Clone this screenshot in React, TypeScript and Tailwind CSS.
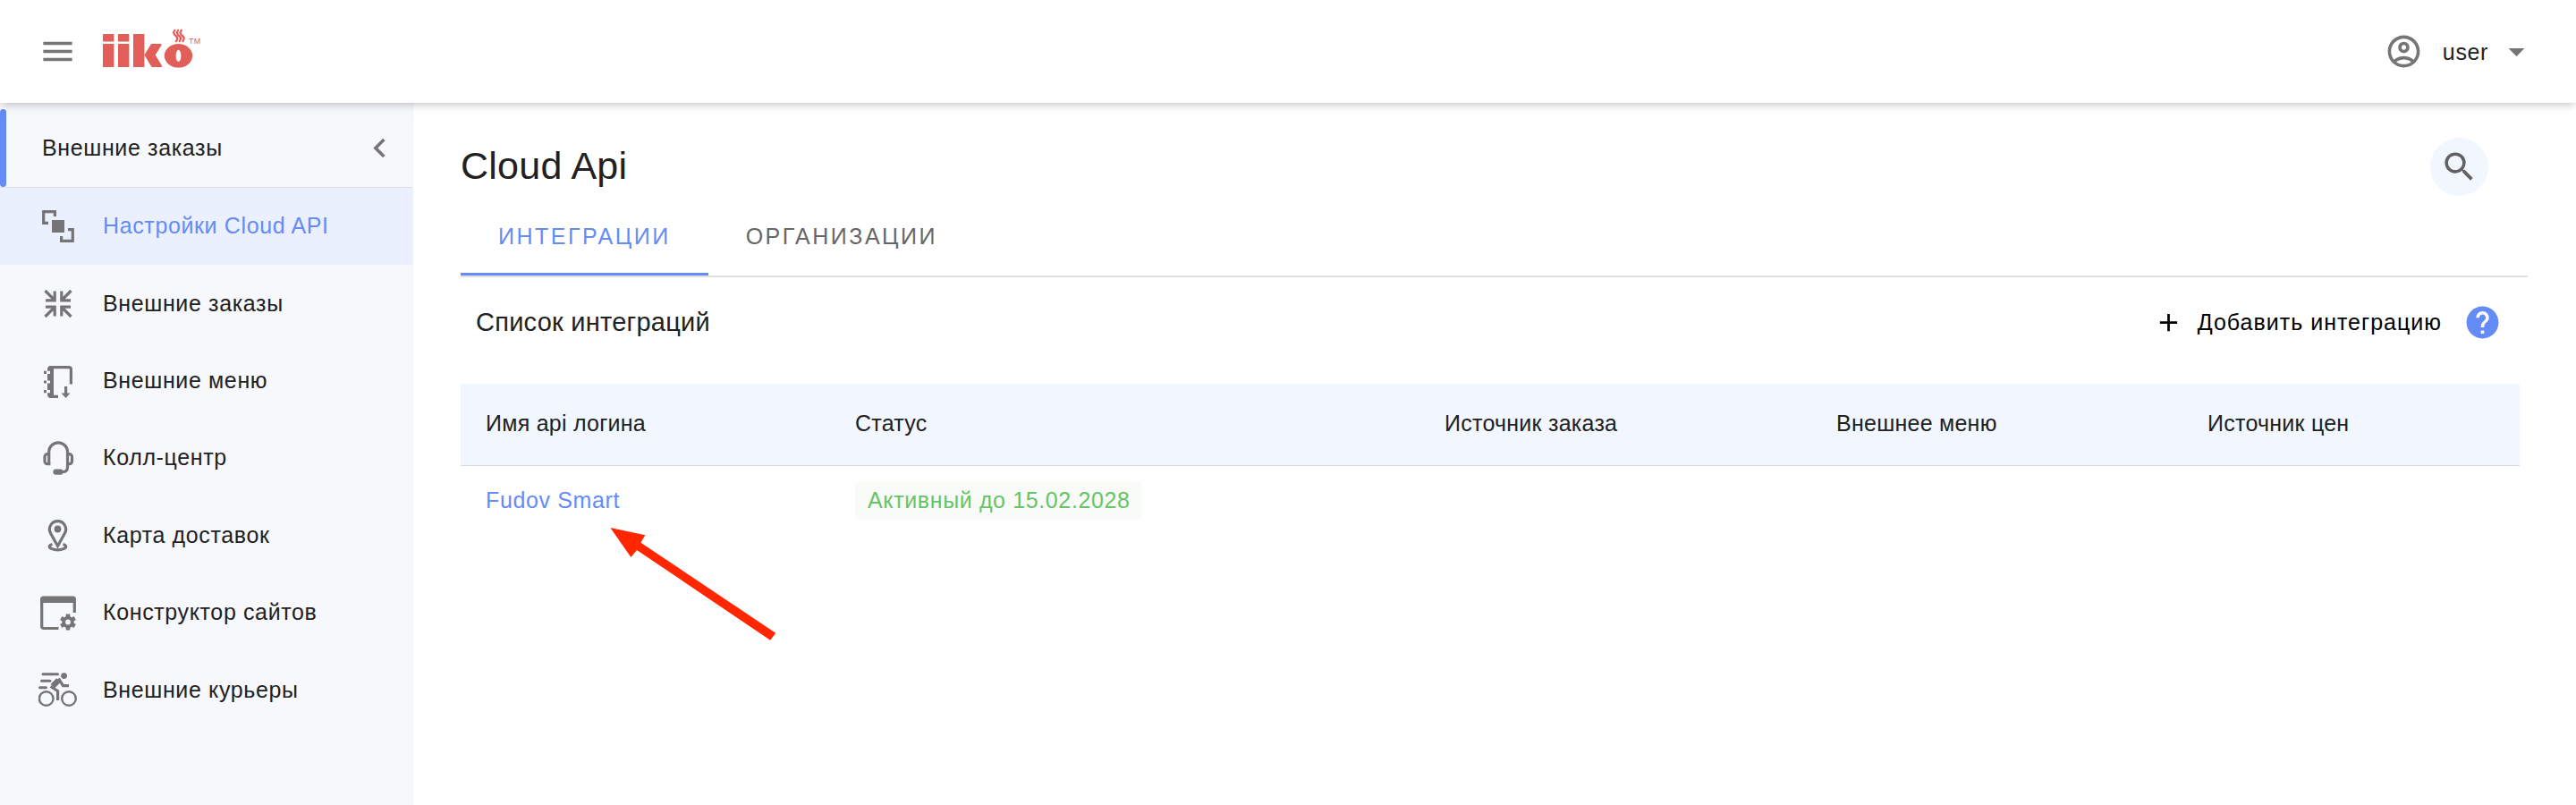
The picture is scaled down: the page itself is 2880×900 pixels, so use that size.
import React from 'react';
import {
  MdAdd,
  MdArrowDropDown,
  MdChevronLeft,
  MdHelp,
  MdMenu,
  MdOutlineAccountCircle,
  MdSearch,
} from 'react-icons/md';

interface IconProps {
  children: React.ReactNode;
}

// Shared frame for the sidebar icons
const NavIcon: React.FC<IconProps> = ({ children }) => (
  <svg
    viewBox="0 0 43 43"
    className="w-[43px] h-[43px] shrink-0 text-[#757575]"
    fill="none"
    stroke="currentColor"
    strokeWidth="3.2"
    aria-hidden="true"
  >
    {children}
  </svg>
);

const CloudSettingsIcon = () => (
  <NavIcon>
    <path d="M18.4 10V4.7H5.7V17.4H11" />
    <rect x="15" y="14" width="14" height="14" fill="currentColor" stroke="none" />
    <path d="M25.6 32V37.4H38.3V24.7H33" />
  </NavIcon>
);

const OrdersIcon = () => (
  <NavIcon>
    <path d="M7.5 7 17.5 17M18.2 7.5V17.8H8" />
    <path d="M36.5 7 26.5 17M25.8 7.5V17.8H36" />
    <path d="M7.5 36 17.5 26M18.2 35.5V25.2H8" />
    <path d="M36.5 36 26.5 26M25.8 35.5V25.2H36" />
  </NavIcon>
);

const MenuBookIcon = () => (
  <NavIcon>
    <path d="M36.4 24.5V8a2.4 2.4 0 0 0-2.4-2.4H14V38.4H22" />
    <path d="M17 4h-3a4 4 0 0 0-4 4v28a4 4 0 0 0 4 4h3z" fill="currentColor" stroke="none" />
    <path d="M6 11.3h3M6 22h3M6 32.7h3" />
    <path d="M10 11.3h3M10 22h3M10 32.7h3" stroke="#f7f8fc" />
    <path d="M30.6 27v8" />
    <path d="M25.5 34.5h10l-5 5.5z" fill="currentColor" stroke="none" />
  </NavIcon>
);

const HeadsetIcon = () => (
  <NavIcon>
    <path d="M11.7 27.6V14.2a10.4 10.4 0 0 1 20.8 0V31.5q0 5-5 5H24" />
    <path d="M11.7 16.7H10A3 3 0 0 0 7 19.7v5a3 3 0 0 0 3 3h3.3" />
    <path d="M32.5 16.7H34.5a3 3 0 0 1 3 3v5a3 3 0 0 1-3 3h-2" />
    <rect x="16.4" y="33.6" width="11.2" height="6.2" rx="3" fill="currentColor" stroke="none" />
  </NavIcon>
);

const MapPinIcon = () => (
  <NavIcon>
    <path d="M21.5 33.5 13.6 19.3A9.1 9.1 0 1 1 29.4 19.3z" />
    <circle cx="21.5" cy="14.5" r="3.9" fill="currentColor" stroke="none" />
    <path d="M15.5 31.6A9.2 3.4 0 1 0 27.5 31.6" />
  </NavIcon>
);

const SiteBuilderIcon = () => (
  <NavIcon>
    <path d="M40.3 21V6M3.7 6V36.5a2 2 0 0 0 2 2H22.5" />
    <path d="M2 10V6a3.5 3.5 0 0 1 3.5-3.5h33A3.5 3.5 0 0 1 42 6v4z" fill="currentColor" stroke="none" />
    <circle cx="33" cy="31.5" r="4.8" strokeWidth="3.8" />
    <path
      d="M33 22.6v3.7M33 36.700v3.700M25.300 27.100l3.200 1.800M37.500 34.100l3.200 1.800M25.300 35.900l3.200-1.800M37.500 28.900l3.200-1.800"
      strokeWidth="4.600"
    />
  </NavIcon>
);

const CourierIcon = () => (
  <NavIcon>
    <path d="M5 3.700H21.500M3.500 11.200H13M1.500 18.700H8.500" strokeWidth="3" strokeLinecap="round" />
    <circle cx="28.600" cy="5.600" r="3.400" fill="currentColor" stroke="none" />
    <circle cx="8.700" cy="31" r="7.800" strokeWidth="2.400" />
    <circle cx="34" cy="31" r="7.800" strokeWidth="2.400" />
    <path d="M22.500 10.500 15.800 17.200" strokeWidth="6.400" strokeLinejoin="round" />
    <path d="M13.500 17.500 21.600 22.500V33" strokeLinejoin="round" />
    <path d="M22.500 8.500 27.500 16.700H34" />
  </NavIcon>
);

const Logo = () => (
  <svg viewBox="0 0 112 46" className="w-[112px] h-[46px]" fill="#e25f59" role="img" aria-label="iiko">
    <defs>
      <clipPath id="logo-arms">
        <rect x="45" y="18" width="30" height="26" />
      </clipPath>
    </defs>
    <rect x="1" y="7" width="12.4" height="8.5" rx="0.5" />
    <rect x="1" y="18" width="12.4" height="26" rx="0.5" />
    <rect x="18" y="7" width="12.4" height="8.5" rx="0.5" />
    <rect x="18" y="18" width="12.4" height="26" rx="0.5" />
    <rect x="35" y="7" width="12.4" height="37" rx="0.5" />
    <g clipPath="url(#logo-arms)" stroke="#e25f59" strokeWidth="10.5">
      <line x1="52" y1="33" x2="62.5" y2="16" />
      <line x1="52" y1="28" x2="63" y2="46" />
    </g>
    <ellipse cx="85.5" cy="31.3" rx="15.7" ry="13.2" />
    <ellipse cx="85.5" cy="31.3" rx="2.9" ry="6.5" fill="#fff" />
    {/* Steam over the cup */}
    <g fill="none" stroke="#e25f59" strokeWidth="2.3" strokeLinecap="round">
      <path d="M81.5 2.800c-2.800 3-.5 5 1.500 6.700s1.500 3.500 0 5.500" />
      <path d="M85.200 2.800c-2.800 3-.5 5 1.500 6.700s1.500 3.500 0 5.500" />
      <path d="M88.900 2.800c-2.800 3-.5 5 1.500 6.700s1.500 3.500 0 5.500" />
    </g>
    <text x="97" y="18" fontSize="9" fontFamily="Liberation Sans, sans-serif">
      TM
    </text>
  </svg>
);

const navItems = [
  { label: 'Настройки Cloud API', Icon: CloudSettingsIcon, active: true },
  { label: 'Внешние заказы', Icon: OrdersIcon },
  { label: 'Внешние меню', Icon: MenuBookIcon },
  { label: 'Колл-центр', Icon: HeadsetIcon },
  { label: 'Карта доставок', Icon: MapPinIcon },
  { label: 'Конструктор сайтов', Icon: SiteBuilderIcon },
  { label: 'Внешние курьеры', Icon: CourierIcon },
];

const columns = [
  { label: 'Имя api логина', width: 'w-[413px]' },
  { label: 'Статус', width: 'w-[659px]' },
  { label: 'Источник заказа', width: 'w-[438px]' },
  { label: 'Внешнее меню', width: 'w-[415px]' },
  { label: 'Источник цен', width: '' },
];

const Header = () => (
  <header className="relative z-10 flex h-[115px] items-center justify-between bg-white pl-[43px] pr-[45px] shadow-[0_4px_8px_-2px_rgba(0,0,0,0.2),0_6px_18px_0_rgba(0,0,0,0.03)]">
    <div className="flex items-center gap-7">
      <button type="button" aria-label="Меню">
        <MdMenu className="h-[43px] w-[43px] text-[#757575]" />
      </button>
      <a href="#" className="-mt-2">
        <Logo />
      </a>
    </div>
    <button type="button" className="flex items-center">
      <MdOutlineAccountCircle className="h-[43px] w-[43px] text-[#757575]" />
      <span className="ml-[22px] mr-[10px] tracking-wide">user</span>
      <MdArrowDropDown className="h-[43px] w-[43px] text-[#757575]" />
    </button>
  </header>
);

const Sidebar = () => (
  <aside className="w-[462px] shrink-0 border-r border-[#f1f1f4] bg-[#f7f8fc] pt-[7px]">
    <div className="flex h-[88px] items-center justify-between border-b border-[#dcdee4]">
      <div className="h-full w-[7px] rounded bg-[#658bf7]" />
      <span className="ml-10 flex-1 pb-0.5 tracking-wide">Внешние заказы</span>
      <button type="button" aria-label="Свернуть" className="mr-[15px]">
        <MdChevronLeft className="h-[43px] w-[43px] text-[#757575]" />
      </button>
    </div>
    <nav className="grid h-[605px] grid-rows-7">
      {navItems.map(({ label, Icon, active }) => (
        <a
          key={label}
          href="#"
          className={`flex items-center gap-[29px] pl-[43px] tracking-wide ${
            active ? 'bg-[#eaf0fe] text-[#658bf7]' : ''
          }`}
        >
          <Icon />
          <span className="pb-0.5">{label}</span>
        </a>
      ))}
    </nav>
  </aside>
);

const IntegrationsTable = () => (
  <table className="w-full table-fixed text-left">
    <thead>
      <tr className="h-[91px] border-b border-[#d5d9e1] bg-[#f1f6ff]">
        {columns.map((column) => (
          <th key={column.label} scope="col" className={`${column.width} px-7 pb-0.5 font-normal`}>
            {column.label}
          </th>
        ))}
      </tr>
    </thead>
    <tbody>
      <tr className="h-[79px] tracking-wide">
        <td className="relative px-7 pb-0.5">
          <a href="#" className="text-[#658bf7]">
            Fudov Smart
          </a>
          {/* Pointer to the login link */}
          <svg
            viewBox="0 0 186 126"
            className="pointer-events-none absolute left-[167px] top-[69px] h-[126px] w-[186px]"
            fill="#ff2600"
            aria-hidden="true"
          >
            <path d="M0.4 0 39.3 8.3 34.4 16.7 185.2 117.7 179.2 125.7 30 25 23.4 33z" />
          </svg>
        </td>
        <td className="px-7">
          <span className="inline-flex h-[43px] items-center rounded-md bg-[#f8fbf8] px-[14px] pb-0.5 text-[#67c466]">
            Активный до 15.02.2028
          </span>
        </td>
        <td />
        <td />
        <td />
      </tr>
    </tbody>
  </table>
);

export default function App() {
  return (
    <div className="flex min-h-screen flex-col bg-white font-['Liberation_Sans',Arial,sans-serif] text-[25px] leading-9 tracking-[0.01em] text-[#212121]">
      <Header />
      <div className="flex flex-1">
        <Sidebar />
        <main className="flex-1 pl-[53px] pr-[54px] pt-[39px]">
          <div className="flex h-[65px] items-center justify-between pr-[44px]">
            <h1 className="pb-1 text-[43px]">Cloud Api</h1>
            <button
              type="button"
              aria-label="Поиск"
              className="flex h-[65px] w-[65px] items-center justify-center rounded-full bg-[#f1f6ff]"
            >
              <MdSearch className="h-[43px] w-[43px] text-[#616161]" />
            </button>
          </div>

          {/* Tabs */}
          <div role="tablist" className="mt-[3px] flex h-[88px] border-b-2 border-[#e0e0e0]">
            <button
              type="button"
              role="tab"
              aria-selected="true"
              className="border-b-3 border-[#658bf7] px-[42px] tracking-widest text-[#658bf7]"
            >
              ИНТЕГРАЦИИ
            </button>
            <button
              type="button"
              role="tab"
              aria-selected="false"
              className="border-b-3 border-transparent px-[42px] tracking-widest text-[#666666]"
            >
              ОРГАНИЗАЦИИ
            </button>
          </div>

          <section className="pr-[9px]">
            <div className="mb-[19px] flex h-[100px] items-center justify-between pl-[17px] pr-[20px]">
              <h2 className="text-[29px]">Список интеграций</h2>
              <div className="flex items-center gap-6 text-black">
                <button type="button" className="flex items-center gap-4 tracking-[0.04em]">
                  <MdAdd className="h-[33px] w-[33px]" />
                  Добавить интеграцию
                </button>
                <button type="button" aria-label="Справка">
                  <MdHelp className="h-[43px] w-[43px] text-[#658bf7]" />
                </button>
              </div>
            </div>
            <IntegrationsTable />
          </section>
        </main>
      </div>
    </div>
  );
}
